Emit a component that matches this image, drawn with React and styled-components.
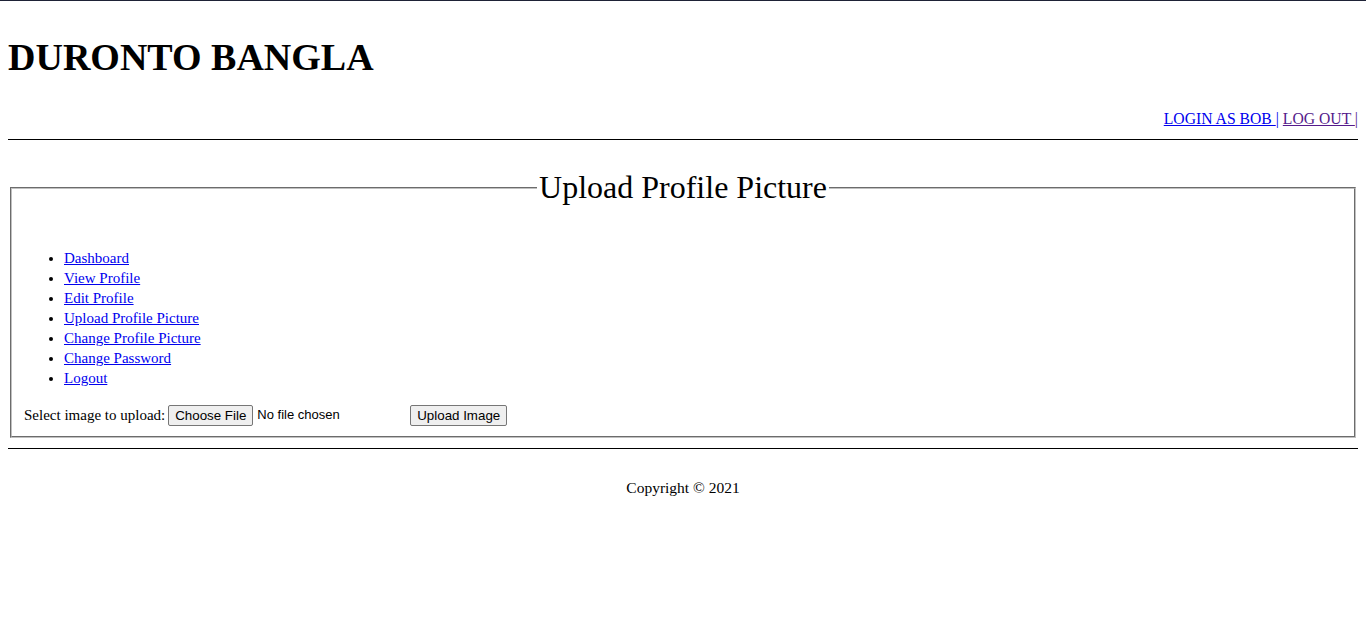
import React from 'react';
import styled, { createGlobalStyle } from 'styled-components';

const GlobalStyle = createGlobalStyle`
  html, body {
    margin: 0;
    padding: 0;
    background: #ffffff;
  }
  body {
    font-family: "Liberation Serif", "Times New Roman", serif;
    font-size: 16px;
    color: #000000;
  }
`;

const menuItems = [
  'Dashboard',
  'View Profile',
  'Edit Profile',
  'Upload Profile Picture',
  'Change Profile Picture',
  'Change Password',
  'Logout',
];

const TopEdge = styled.div`
  height: 1px;
  background-color: #1e2236;
`;

const Page = styled.div`
  display: flow-root;
  padding: 0 8px;
`;

const Brand = styled.h1`
  margin: 34px 0 0 0;
  font-size: 38px;
  line-height: 44px;
  font-weight: bold;
`;

const UserBar = styled.div`
  margin-top: 30px;
  text-align: right;
  font-size: 15.7px;
  line-height: 20px;
`;

const Link = styled.a`
  color: ${props => (props.visited ? '#551a8b' : '#0000ee')};
  text-decoration: underline;
  cursor: pointer;
`;

const Pipe = styled.span`
  color: ${props => (props.visited ? '#551a8b' : '#0000ee')};
`;

const Rule = styled.hr`
  margin: ${props => props.top}px 0 ${props => props.bottom}px 0;
  border: 0;
  border-top: 1px solid #000000;
  height: 0;
`;

const Box = styled.fieldset`
  margin: 0 2px;
  padding: 6px 12px 10px;
  border: 2px groove #c0c0c0;
  min-width: 0;
`;

const Legend = styled.legend`
  margin: 0 auto;
  padding: 0 2px;
  font-size: 32px;
  line-height: 37px;
`;

const Menu = styled.ul`
  margin: 36px 0 16px 0;
  padding-left: 40px;
  list-style: disc;
  font-size: 15px;
`;

const MenuItem = styled.li`
  line-height: 20px;
`;

const UploadRow = styled.form`
  display: flex;
  align-items: center;
  height: 22px;
  line-height: 20px;
`;

const FieldLabel = styled.span`
  margin-right: 3px;
  font-size: 15px;
`;

const FileField = styled.span`
  display: inline-flex;
  align-items: center;
  width: 238px;
  font-family: "Liberation Sans", Arial, sans-serif;
  font-size: 13px;
`;

const NativeButton = styled.button`
  height: 21px;
  padding: 1px 6px;
  margin: 0 ${props => (props.gap ? 4 : 0)}px 0 ${props => (props.push ? 4 : 0)}px;
  font-family: "Liberation Sans", Arial, sans-serif;
  font-size: 13.333px;
  color: #000000;
  background-color: #efefef;
  border: 1px solid #767676;
  border-radius: 2px;
  cursor: pointer;
  &:hover {
    background-color: #e5e5e5;
  }
`;

const NoFile = styled.span`
  white-space: nowrap;
`;

const Footer = styled.div`
  text-align: center;
  font-size: 15.5px;
  line-height: 20px;
`;

export default function App() {
  return (
    <>
      <GlobalStyle />
      <TopEdge />
      <Page>
        <Brand>DURONTO BANGLA</Brand>
        <UserBar>
          <Link>LOGIN AS BOB </Link>
          <Pipe>|</Pipe>{' '}
          <Link visited>LOG OUT </Link>
          <Pipe visited>|</Pipe>
        </UserBar>
        <Rule top={10} bottom={29} />
        <Box>
          <Legend>Upload Profile Picture</Legend>
          <Menu>
            {menuItems.map(item => (
              <MenuItem key={item}>
                <Link>{item}</Link>
              </MenuItem>
            ))}
          </Menu>
          <UploadRow onSubmit={e => e.preventDefault()}>
            <FieldLabel>Select image to upload:</FieldLabel>
            <FileField>
              <NativeButton type="button" gap>Choose File</NativeButton>
              <NoFile>No file chosen</NoFile>
            </FileField>
            <NativeButton type="submit" push>Upload Image</NativeButton>
          </UploadRow>
        </Box>
        <Rule top={10} bottom={29} />
        <Footer>Copyright © 2021</Footer>
      </Page>
    </>
  );
}
